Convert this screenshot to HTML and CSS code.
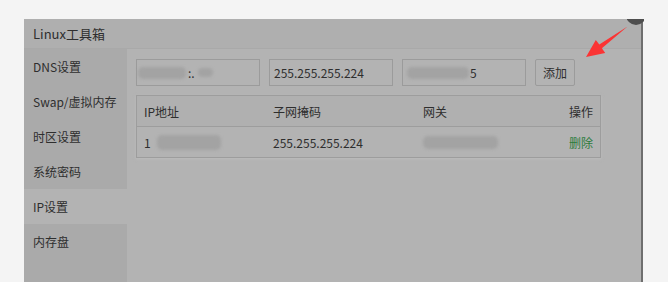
FILE: index.html
```html
<!DOCTYPE html>
<html lang="zh-CN">
<head>
<meta charset="utf-8">
<title>Linux工具箱</title>
<link rel="stylesheet" href="styles.css">
</head>
<body>
<div class="dialog">
  <div class="close-dot"><span></span></div>
  <div class="title">Linux工具箱</div>
  <div class="main">
    <nav class="sidebar">
      <div class="item">DNS设置</div>
      <div class="item">Swap/虚拟内存</div>
      <div class="item">时区设置</div>
      <div class="item">系统密码</div>
      <div class="item active">IP设置</div>
      <div class="item">内存盘</div>
    </nav>
    <section class="content">
      <div class="form">
        <div class="input"><span class="blob b1"></span><span class="frag">:.</span><span class="blob b2"></span></div>
        <div class="input">255.255.255.224</div>
        <div class="input"><span class="blob b3"></span><span>5</span></div>
        <button class="btn">添加</button>
      </div>
      <div class="table">
        <div class="row head">
          <div class="cell">IP地址</div>
          <div class="cell">子网掩码</div>
          <div class="cell">网关</div>
          <div class="cell op">操作</div>
        </div>
        <div class="row">
          <div class="cell">1<span class="blob b4"></span></div>
          <div class="cell">255.255.255.224</div>
          <div class="cell"><span class="blob b5"></span></div>
          <div class="cell op del">删除</div>
        </div>
      </div>
    </section>
  </div>
</div>
<svg class="arrow" width="668" height="282" viewBox="0 0 668 282">
  <polygon points="586,57 595.8,39.9 599.3,44.6 627.5,26.5 601.9,48.2 605.2,52.9" fill="#fb3434"/>
</svg>
</body>
</html>
```
FILE: styles.css
```css
html, body {
  margin: 0;
  height: 100%;
}
body {
  box-sizing: border-box;
  padding: 19px 0 0 24px;
  background: #f4f4f4;
  font-family: "Noto Sans CJK SC", "Noto Sans", sans-serif;
  color: #2e2e2e;
  overflow: hidden;
  position: relative;
}
.dialog {
  position: relative;
  width: 617px;
  height: 263px;
  border-right: 2px solid #6e6e6e;
  background: #b3b3b3;
  display: flex;
  flex-direction: column;
}
.close-dot {
  position: absolute;
  top: 0;
  right: -3px;
  width: 17px;
  height: 7px;
  overflow: hidden;
}
.close-dot span {
  position: absolute;
  left: -1px;
  top: -14px;
  width: 20px;
  height: 20px;
  border-radius: 50%;
  background: #4e4e4e;
}
.title {
  flex: none;
  height: 29px;
  line-height: 29px;
  padding-left: 9px;
  font-size: 13px;
  background: #afafaf;
  border-bottom: 1px solid #a9a9a9;
}
.main {
  flex: 1;
  display: flex;
}
.sidebar {
  flex: none;
  width: 103px;
  background: #aaaaaa;
}
.item {
  height: 35px;
  line-height: 35px;
  padding-left: 9px;
  font-size: 12px;
  white-space: nowrap;
}
.item.active {
  background: #b3b3b3;
  margin-right: -1px;
}
.content {
  flex: 1;
  padding: 10px 0 0 9px;
}
.form {
  display: flex;
  gap: 9px;
  height: 27px;
}
.input {
  box-sizing: border-box;
  width: 124px;
  height: 27px;
  border: 1px solid #9b9b9b;
  padding-left: 4px;
  font-size: 12px;
  line-height: 25px;
  display: flex;
  align-items: center;
  white-space: nowrap;
}
.btn {
  box-sizing: border-box;
  width: 40px;
  height: 27px;
  margin: 0;
  padding: 0;
  border: 1px solid #9b9b9b;
  border-radius: 2px;
  background: #b3b3b3;
  color: #2e2e2e;
  font-family: inherit;
  font-size: 12px;
}
.blob {
  display: inline-block;
  background: #a3a3a3;
  border-radius: 5px;
  filter: blur(1.5px);
}
.b1 { width: 48px; height: 12px; margin-left: -3px; }
.frag { margin: 0 3px 0 2px; }
.b2 { width: 15px; height: 9px; }
.b3 { width: 62px; height: 12px; margin-right: 1px; }
.b4 { width: 64px; height: 15px; margin-left: 6px; }
.b5 { width: 75px; height: 13px; }
.table {
  margin-top: 9px;
  width: 465px;
  box-sizing: border-box;
  border: 1px solid #9d9d9d;
  box-shadow: 0 1px 3px rgba(200,200,200,0.5);
}
.row {
  display: grid;
  grid-template-columns: 129px 150px 1fr auto;
  height: 30px;
  align-items: center;
  font-size: 12px;
}
.row.head {
  background: #b0b0b0;
  border-bottom: 1px solid #9d9d9d;
}
.cell {
  padding: 0 7px;
  display: flex;
  align-items: center;
  white-space: nowrap;
}
.op {
  justify-content: flex-end;
}
.del {
  color: #2d7c3c;
}
.arrow {
  position: absolute;
  left: 0;
  top: 0;
  pointer-events: none;
}
```
